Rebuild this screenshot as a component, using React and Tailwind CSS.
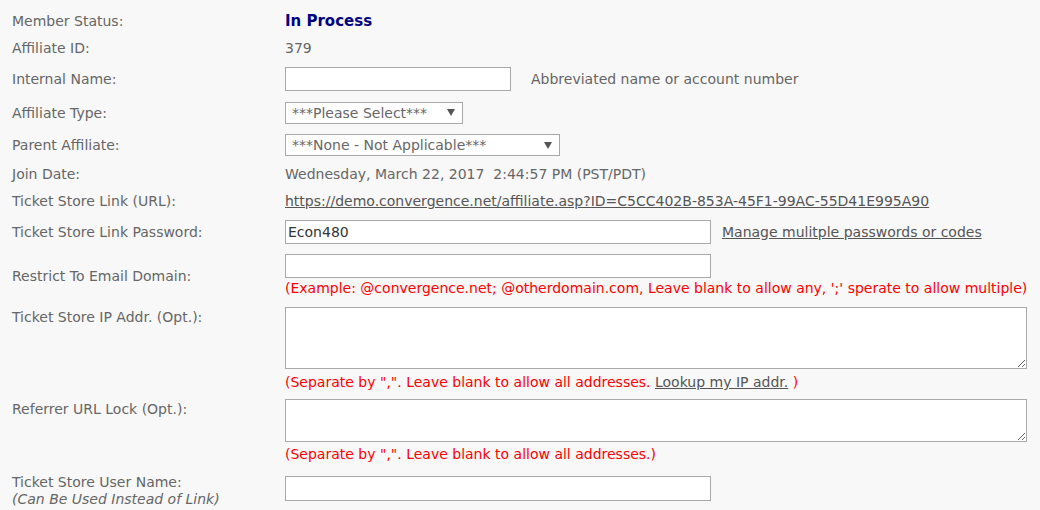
const FONT = "font-['DejaVu_Sans','Verdana',sans-serif]"

function Label({ children }) {
  return <div className="w-[285px] shrink-0 pl-3 text-[#666]">{children}</div>
}

function FakeSelect({ text, w }) {
  return (
    <div className={`${w} h-[22px] flex items-center justify-between bg-white border border-[#a9a9a9] pl-[6px] pr-[7px] text-[#666]`}>
      <span>{text}</span>
      <svg width="8" height="7" viewBox="0 0 8 7" className="shrink-0">
        <path d="M0 0 H8 L4 7 Z" fill="#555" />
      </svg>
    </div>
  )
}

export default function App() {
  return (
    <div className={`${FONT} w-[1040px] h-[510px] overflow-hidden bg-[#f8f8f8] text-[14px] leading-[18px] pt-2`}>
      <div className="flex items-center h-[26px]">
        <Label>Member Status:</Label>
        <span className="font-bold text-[15px] text-[#000080]">In Process</span>
      </div>
      <div className="flex items-center h-[28px]">
        <Label>Affiliate ID:</Label>
        <span className="text-[#666]">379</span>
      </div>
      <div className="flex items-center h-[34px]">
        <Label>Internal Name:</Label>
        <input className="w-[226px] h-[24px] bg-white border border-[#a9a9a9] outline-none" />
        <span className="ml-5 text-[#666]">Abbreviated name or account number</span>
      </div>
      <div className="flex items-center h-[33px]">
        <Label>Affiliate Type:</Label>
        <FakeSelect text="***Please Select***" w="w-[178px]" />
      </div>
      <div className="flex items-center h-[32px]">
        <Label>Parent Affiliate:</Label>
        <FakeSelect text="***None - Not Applicable***" w="w-[275px]" />
      </div>
      <div className="flex items-center h-[26px]">
        <Label>Join Date:</Label>
        <span className="text-[#666] whitespace-pre">Wednesday, March 22, 2017  2:44:57 PM (PST/PDT)</span>
      </div>
      <div className="flex items-center h-[28px]">
        <Label>Ticket Store Link (URL):</Label>
        <a className="text-[#555] underline">https://demo.convergence.net/affiliate.asp?ID=C5CC402B-853A-45F1-99AC-55D41E995A90</a>
      </div>
      <div className="flex items-center h-[34px]">
        <Label>Ticket Store Link Password:</Label>
        <input defaultValue="Econ480" className="w-[426px] h-[24px] px-[2px] bg-white border border-[#a9a9a9] text-[#333] outline-none" />
        <a className="ml-[11px] text-[#555] underline">Manage mulitple passwords or codes</a>
      </div>
      <div className="flex items-center h-[53px]">
        <Label>Restrict To Email Domain:</Label>
        <div className="flex flex-col">
          <input className="w-[426px] h-[24px] bg-white border border-[#a9a9a9] outline-none" />
          <span className="mt-[1px] text-[#f00]">(Example: @convergence.net; @otherdomain.com, Leave blank to allow any, ';' sperate to allow multiple)</span>
        </div>
      </div>
      <div className="flex items-start h-[96px] pt-[5px]">
        <Label><div className="pt-[1px]">Ticket Store IP Addr. (Opt.):</div></Label>
        <div className="flex flex-col">
          <textarea className="block w-[742px] h-[62px] bg-white border border-[#a9a9a9] outline-none" />
          <span className="mt-[4px] text-[#f00]">
            (Separate by ",". Leave blank to allow all addresses. <a className="text-[#555] underline">Lookup my IP addr.</a> )
          </span>
        </div>
      </div>
      <div className="flex items-start h-[75px] pt-[1px]">
        <Label><div className="pt-[1px]">Referrer URL Lock (Opt.):</div></Label>
        <div className="flex flex-col">
          <textarea className="block w-[742px] h-[43px] bg-white border border-[#a9a9a9] outline-none" />
          <span className="mt-[3px] text-[#f00]">(Separate by ",". Leave blank to allow all addresses.)</span>
        </div>
      </div>
      <div className="flex items-start">
        <Label>
          <div>Ticket Store User Name:</div>
          <div className="italic -mt-[1px]">(Can Be Used Instead of Link)</div>
        </Label>
        <input className="mt-[3px] w-[426px] h-[25px] bg-white border border-[#a9a9a9] outline-none" />
      </div>
    </div>
  )
}
